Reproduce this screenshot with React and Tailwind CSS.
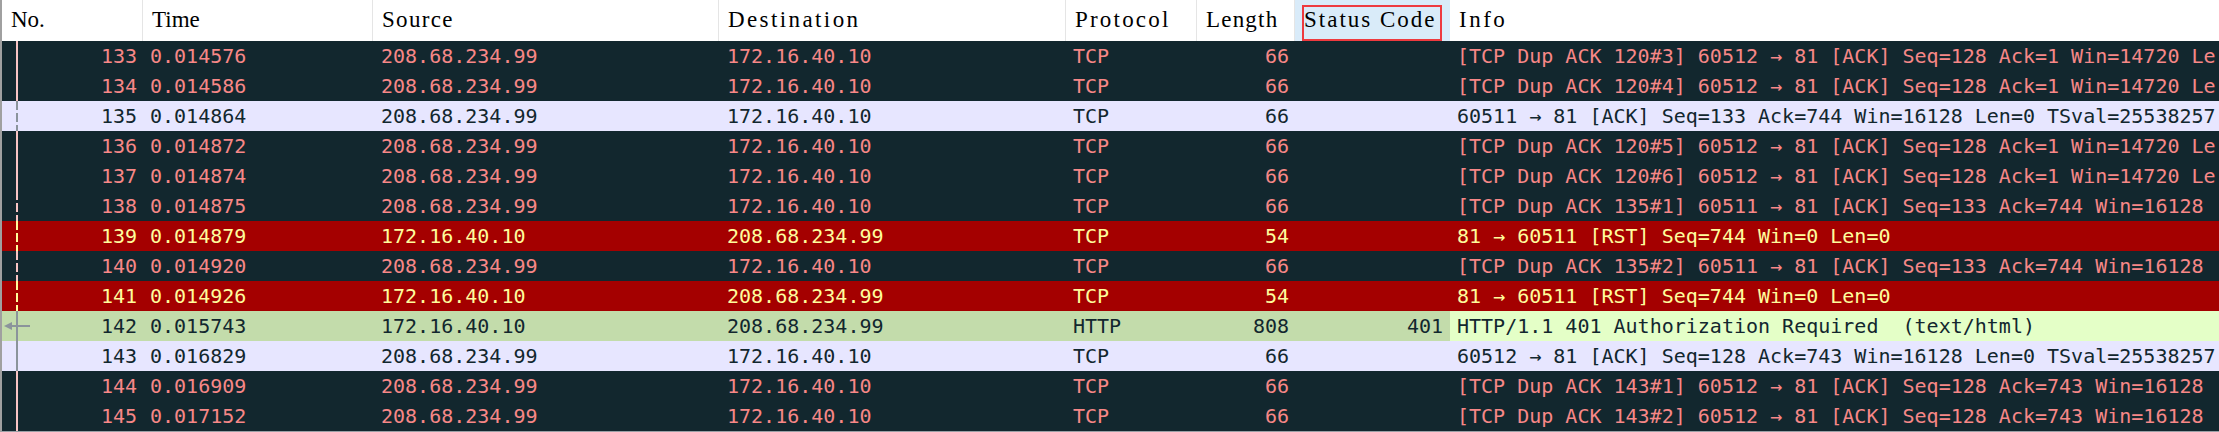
const PINK = '#f8c4c4'
const GRAY = '#8b949b'
const YELLOW = '#fffc9c'

const rows = [
  { no: 133, time: '0.014576', src: '208.68.234.99', dst: '172.16.40.10', proto: 'TCP', len: 66, info: '[TCP Dup ACK 120#3] 60512 → 81 [ACK] Seq=128 Ack=1 Win=14720 Le', kind: 'bad', mark: ['solid', PINK] },
  { no: 134, time: '0.014586', src: '208.68.234.99', dst: '172.16.40.10', proto: 'TCP', len: 66, info: '[TCP Dup ACK 120#4] 60512 → 81 [ACK] Seq=128 Ack=1 Win=14720 Le', kind: 'bad', mark: ['solid', PINK] },
  { no: 135, time: '0.014864', src: '208.68.234.99', dst: '172.16.40.10', proto: 'TCP', len: 66, info: '60511 → 81 [ACK] Seq=133 Ack=744 Win=16128 Len=0 TSval=25538257', kind: 'tcp', mark: ['dash', GRAY] },
  { no: 136, time: '0.014872', src: '208.68.234.99', dst: '172.16.40.10', proto: 'TCP', len: 66, info: '[TCP Dup ACK 120#5] 60512 → 81 [ACK] Seq=128 Ack=1 Win=14720 Le', kind: 'bad', mark: ['solid', PINK] },
  { no: 137, time: '0.014874', src: '208.68.234.99', dst: '172.16.40.10', proto: 'TCP', len: 66, info: '[TCP Dup ACK 120#6] 60512 → 81 [ACK] Seq=128 Ack=1 Win=14720 Le', kind: 'bad', mark: ['solid', PINK] },
  { no: 138, time: '0.014875', src: '208.68.234.99', dst: '172.16.40.10', proto: 'TCP', len: 66, info: '[TCP Dup ACK 135#1] 60511 → 81 [ACK] Seq=133 Ack=744 Win=16128', kind: 'bad', mark: ['dash', PINK] },
  { no: 139, time: '0.014879', src: '172.16.40.10', dst: '208.68.234.99', proto: 'TCP', len: 54, info: '81 → 60511 [RST] Seq=744 Win=0 Len=0', kind: 'rst', mark: ['dash', YELLOW] },
  { no: 140, time: '0.014920', src: '208.68.234.99', dst: '172.16.40.10', proto: 'TCP', len: 66, info: '[TCP Dup ACK 135#2] 60511 → 81 [ACK] Seq=133 Ack=744 Win=16128', kind: 'bad', mark: ['dash', PINK] },
  { no: 141, time: '0.014926', src: '172.16.40.10', dst: '208.68.234.99', proto: 'TCP', len: 54, info: '81 → 60511 [RST] Seq=744 Win=0 Len=0', kind: 'rst', mark: ['dash', YELLOW] },
  { no: 142, time: '0.015743', src: '172.16.40.10', dst: '208.68.234.99', proto: 'HTTP', len: 808, code: 401, info: 'HTTP/1.1 401 Authorization Required  (text/html)', kind: 'http', mark: ['arrow', GRAY] },
  { no: 143, time: '0.016829', src: '208.68.234.99', dst: '172.16.40.10', proto: 'TCP', len: 66, info: '60512 → 81 [ACK] Seq=128 Ack=743 Win=16128 Len=0 TSval=25538257', kind: 'tcp', mark: ['solid', GRAY] },
  { no: 144, time: '0.016909', src: '208.68.234.99', dst: '172.16.40.10', proto: 'TCP', len: 66, info: '[TCP Dup ACK 143#1] 60512 → 81 [ACK] Seq=128 Ack=743 Win=16128', kind: 'bad', mark: ['solid', PINK] },
  { no: 145, time: '0.017152', src: '208.68.234.99', dst: '172.16.40.10', proto: 'TCP', len: 66, info: '[TCP Dup ACK 143#2] 60512 → 81 [ACK] Seq=128 Ack=743 Win=16128', kind: 'bad', mark: ['solid', PINK] },
]

const rowStyles = {
  bad: 'bg-[#12272e] text-[#f78787]',
  tcp: 'bg-[#e7e6ff] text-[#12272e]',
  rst: 'bg-[#a40000] text-[#fffc9c]',
  http: 'bg-[#c3dcab] text-[#12272e]',
}

function Marker({ mark }) {
  const [type, color] = mark
  return (
    <svg className="absolute left-0 top-0" width="30" height="30" viewBox="0 0 30 30">
      {type === 'solid' && <rect x="14" y="0" width="2" height="30" fill={color} />}
      {type === 'dash' && (
        <line x1="15" y1="0" x2="15" y2="30" stroke={color} strokeWidth="2" strokeDasharray="9 3" />
      )}
      {type === 'arrow' && (
        <g fill={color}>
          <rect x="14" y="0" width="2" height="30" />
          <rect x="6" y="14" width="22" height="2" />
          <polygon points="2,15 10,11 10,19" />
        </g>
      )}
    </svg>
  )
}

function HeaderCell({ w, children, className = '' }) {
  return (
    <div className={`${w} shrink-0 h-full border-r border-[#e5e5e5] pl-[9px] flex items-center ${className}`}>
      {children}
    </div>
  )
}

export default function App() {
  return (
    <div className="w-[2219px] h-[432px] overflow-hidden bg-white border-l-2 border-b border-l-[#a0a0a0] border-b-[#9aa0a6]">
      {/* column headers */}
      <div
        className="flex h-[41px] text-[23px] text-black"
        style={{ fontFamily: '"Liberation Serif", "Noto Sans CJK SC", serif' }}
      >
        <HeaderCell w="w-[141px]" className="pl-[8px]">No.</HeaderCell>
        <HeaderCell w="w-[230px]">Time</HeaderCell>
        <HeaderCell w="w-[346px]" className="tracking-[1.3px]">Source</HeaderCell>
        <HeaderCell w="w-[347px]" className="tracking-[2.4px]">Destination</HeaderCell>
        <HeaderCell w="w-[131px]" className="tracking-[2.2px]">Protocol</HeaderCell>
        <HeaderCell w="w-[98px]" className="tracking-[1.2px]">Length</HeaderCell>
        <div className="relative w-[155px] shrink-0 h-full bg-[#d9ebf9] pl-[9px] flex items-center tracking-[2px]">
          Status Code
          <div className="absolute left-[7px] top-[5px] w-[140px] h-[36px] border-2 border-[#ee3a3f]" />
        </div>
        <div className="flex-1 h-full pl-[9px] flex items-center tracking-[2.5px]">Info</div>
      </div>

      {/* packet list */}
      <div
        className="text-[20px] leading-[30px] whitespace-pre"
        style={{ fontFamily: '"DejaVu Sans Mono", "Liberation Mono", monospace' }}
      >
        {rows.map((r) => (
          <div key={r.no} className={`flex h-[30px] ${rowStyles[r.kind]}`}>
            <div className="relative w-[141px] shrink-0 text-right pr-[6px]">
              <Marker mark={r.mark} />
              {r.no}
            </div>
            <div className="w-[230px] shrink-0 pl-[7px]">{r.time}</div>
            <div className="w-[346px] shrink-0 pl-[8px]">{r.src}</div>
            <div className="w-[347px] shrink-0 pl-[8px]">{r.dst}</div>
            <div className="w-[131px] shrink-0 pl-[7px]">{r.proto}</div>
            <div className="w-[98px] shrink-0 text-right pr-[6px]">{r.len}</div>
            <div className="w-[155px] shrink-0 text-right pr-[7px]">{r.code ?? ''}</div>
            <div className={`flex-1 min-w-0 pl-[7px] overflow-hidden ${r.kind === 'http' ? 'bg-[#e4ffc7]' : ''}`}>
              {r.info}
            </div>
          </div>
        ))}
      </div>
    </div>
  )
}
